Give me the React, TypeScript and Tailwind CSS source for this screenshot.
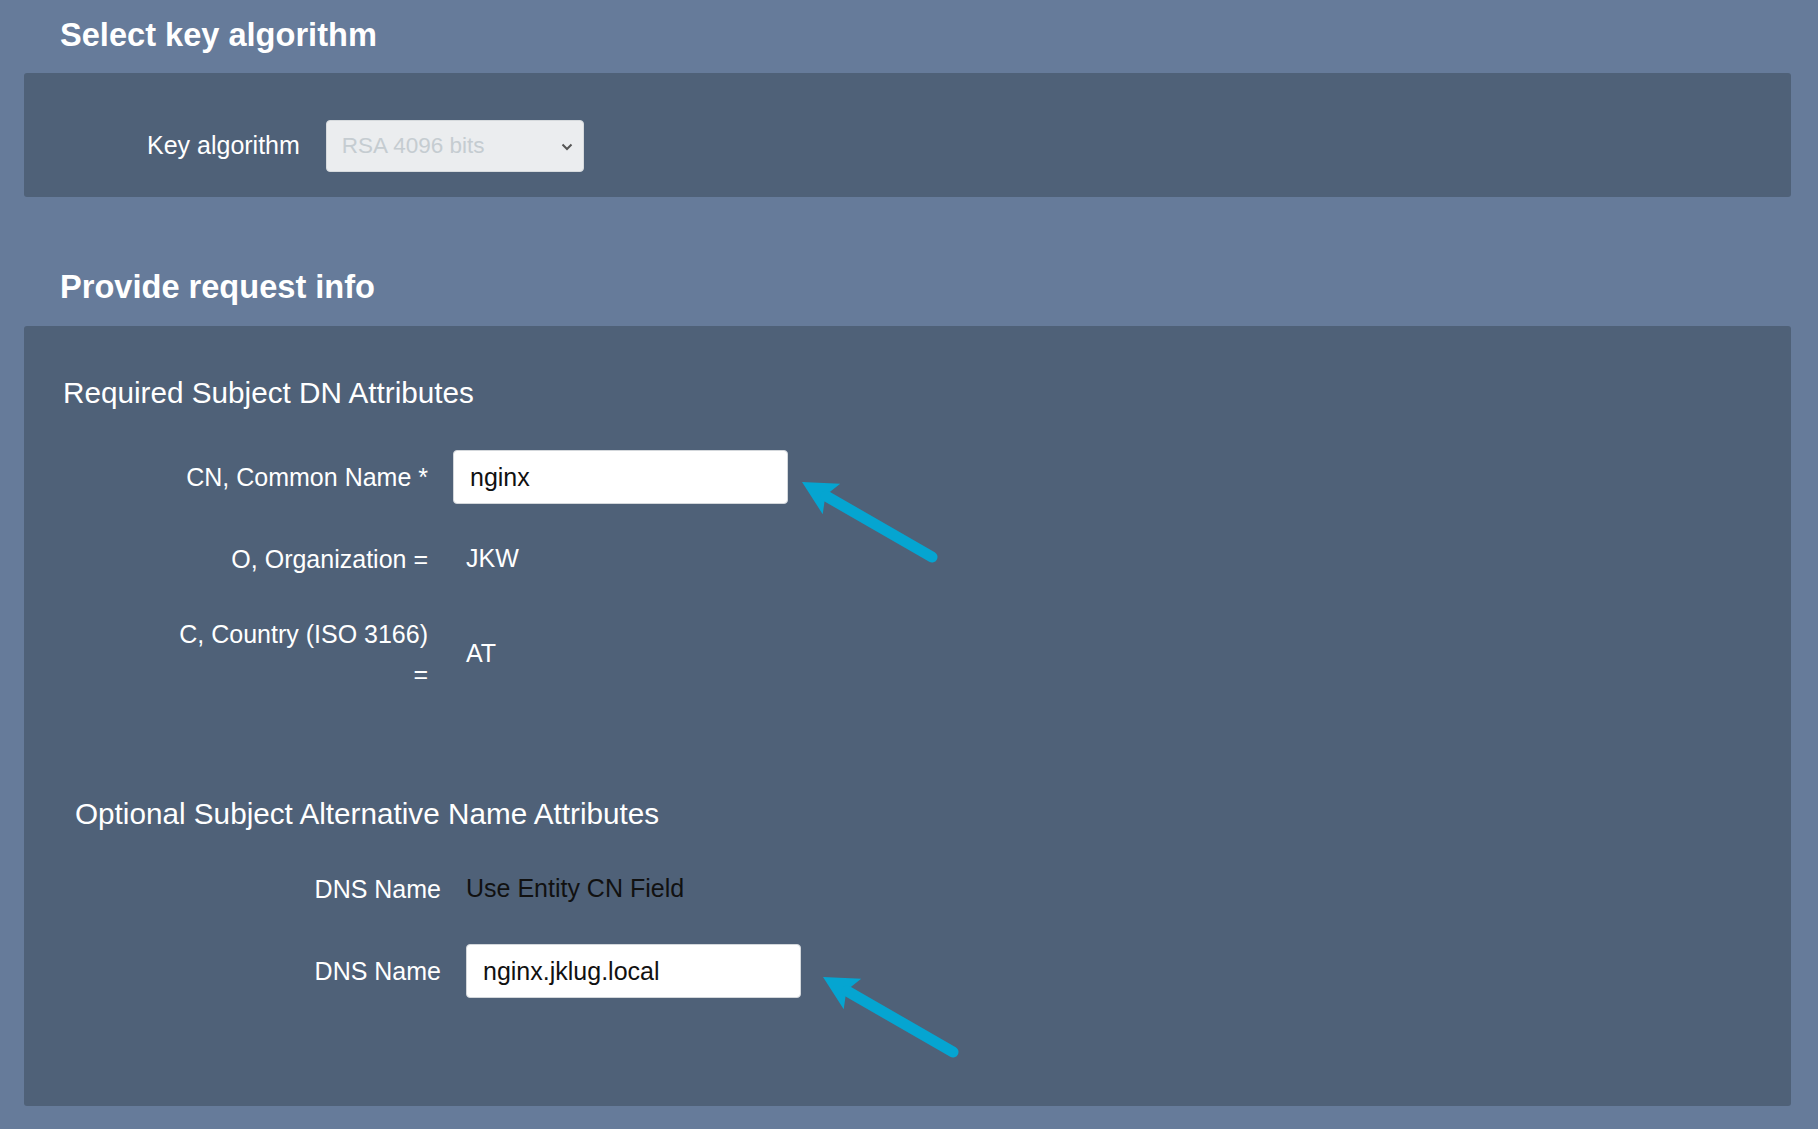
import React from 'react';

const ARROW = '#05a5d1';

// Cyan annotation arrow pointing up-left; tip at (x, y)
const Arrow: React.FC<{ x: number; y: number }> = ({ x, y }) => (
  <g transform={`translate(${x} ${y})`}>
    <polygon points="0,0 38.2,1.8 23.4,13.5 20.7,32.2" fill={ARROW} />
    <line x1="24" y1="14" x2="130" y2="75" stroke={ARROW} strokeWidth="11" strokeLinecap="round" />
  </g>
);

type Row = {
  label: string;
  value?: string;
  input?: string;
  dark?: boolean;
};

const FieldRow: React.FC<{ row: Row; indent: string }> = ({ row, indent }) => (
  <div className={`flex items-center min-h-[54px] ${indent}`}>
    <div className="w-[258px] text-right text-[25px] leading-[40px] text-white">{row.label}</div>
    <div className="ml-[25px] flex items-center">
      {row.input !== undefined ? (
        <input
          readOnly
          value={row.input}
          className="w-[335px] h-[54px] rounded-[4px] bg-white border border-[#d3d7db] pl-[16px] text-[25px] text-[#111] outline-none"
        />
      ) : row.dark ? (
        <span className="text-[25px] text-[#111]">{row.value}</span>
      ) : (
        <span className="pl-[13px] text-[25px] text-white">{row.value}</span>
      )}
    </div>
  </div>
);

const REQUIRED: Row[] = [
  { label: 'CN, Common Name *', input: 'nginx' },
  { label: 'O, Organization =', value: 'JKW' },
  { label: 'C, Country (ISO 3166) =', value: 'AT' },
];

const OPTIONAL: Row[] = [
  { label: 'DNS Name', value: 'Use Entity CN Field', dark: true },
  { label: 'DNS Name', input: 'nginx.jklug.local' },
];

const App: React.FC = () => {
  return (
    <div className="relative min-h-screen bg-[#667b9a] pl-[24px] pr-[27px] pb-[24px] pt-[16px] font-['Liberation_Sans',Arial,sans-serif]">
      <h2 className="pl-[36px] text-[32.6px] leading-[38px] font-bold text-white">Select key algorithm</h2>

      {/* key algorithm panel */}
      <div className="mt-[19px] rounded-[3px] bg-[#4f6178] pt-[47px] pb-[25px] pl-[123px]">
        <div className="flex h-[52px] items-center gap-[26px]">
          <span className="text-[25px] text-white">Key algorithm</span>
          <div className="relative flex h-[52px] w-[258px] items-center rounded-[4px] border border-[#d6dadd] bg-[#ebedef] pl-[15px]">
            <span className="text-[22.5px] text-[#c5ccd1]">RSA 4096 bits</span>
            <svg className="absolute right-[10px] top-[22px]" width="12" height="8" viewBox="0 0 12 8">
              <path d="M1.5 1.5 L6 6 L10.5 1.5" fill="none" stroke="#555" strokeWidth="2" />
            </svg>
          </div>
        </div>
      </div>

      <h2 className="mt-[71px] pl-[36px] text-[32.6px] leading-[38px] font-bold text-white">Provide request info</h2>

      {/* request info panel */}
      <div className="mt-[20px] rounded-[3px] bg-[#4f6178] pt-[49px] pb-[108px]">
        <h3 className="pl-[39px] text-[29.7px] leading-[36px] text-white">Required Subject DN Attributes</h3>
        <div className="mt-[39px] flex flex-col gap-[28px]">
          {REQUIRED.map((r) => (
            <FieldRow key={r.label} row={r} indent="ml-[146px]" />
          ))}
        </div>

        <h3 className="mt-[102px] pl-[51px] text-[29.7px] leading-[36px] text-white">
          Optional Subject Alternative Name Attributes
        </h3>
        <div className="mt-[30px] flex flex-col gap-[28px]">
          {OPTIONAL.map((r, i) => (
            <FieldRow key={i} row={r} indent="ml-[159px]" />
          ))}
        </div>
      </div>

      {/* annotation arrows */}
      <svg className="pointer-events-none absolute left-0 top-0" width="1818" height="1129">
        <Arrow x={802} y={482} />
        <Arrow x={823} y={977} />
      </svg>
    </div>
  );
};

export default App;
